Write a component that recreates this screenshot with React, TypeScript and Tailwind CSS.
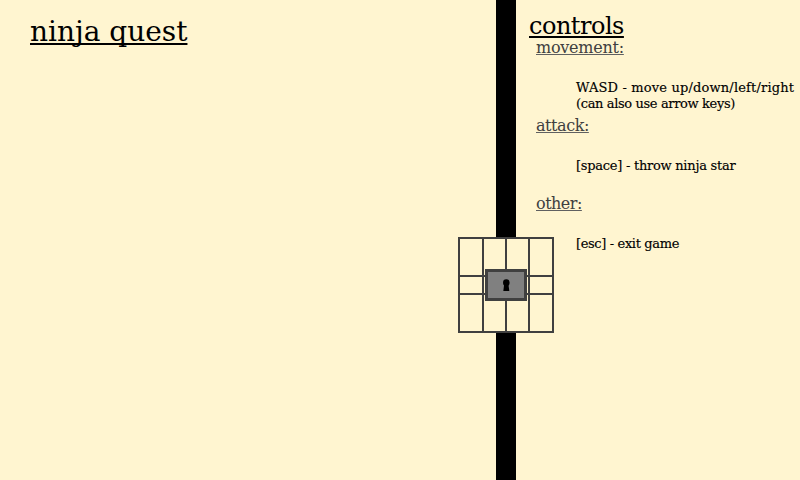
import React from "react";

function Section({ title, titleClass, children }: { title: string; titleClass: string; children: React.ReactNode }) {
  return (
    <section className="h-[78px]">
      <h3 className="ml-[7px] h-[42px] text-[16px] leading-[19px] text-[#404040]">
        <span className={"inline-block whitespace-nowrap underline decoration-[#606060] decoration-1 underline-offset-[1px] [text-decoration-skip-ink:none] " + titleClass}>{title}</span>
      </h3>
      <div className="ml-[47px] whitespace-nowrap text-[13px] leading-[16px] text-black [-webkit-text-stroke:0.15px_black]">{children}</div>
    </section>
  );
}

function Gate() {
  return (
    <svg className="absolute left-[458px] top-[237px]" width="96" height="96" viewBox="0 0 96 96">
      <rect x="1" y="1" width="94" height="94" fill="#fff5d0" stroke="#404040" strokeWidth="2" />
      <path d="M25 0V96M48 0V96M71 0V96M0 39H96M0 57H96" stroke="#404040" strokeWidth="2" />
      <rect x="28.5" y="33.5" width="39" height="29" fill="#808080" stroke="#404040" strokeWidth="3" />
      <ellipse cx="48.3" cy="45.7" rx="3.3" ry="3.4" />
      <path d="M46.2 47h4.2l.9 7h-6z" />
    </svg>
  );
}

export default function App() {
  return (
    <main className="relative flex h-[480px] w-[800px] overflow-hidden bg-[#fff5d0] font-['DejaVu_Serif',serif] text-black">
      <div className="w-[496px] pl-[30px] pt-[14px]">
        <h1 className="text-[28px] leading-[36px]">
          <span className="inline-block whitespace-nowrap underline decoration-[1.5px] underline-offset-[2px] [text-decoration-skip-ink:none]">ninja quest</span>
        </h1>
      </div>
      <div className="w-[20px] bg-black" />
      <aside className="w-[284px] pl-[13px] pt-[10px]">
        <h2 className="h-[28px] text-[24px] leading-[28px]">
          <span className="inline-block whitespace-nowrap pt-[2px] tracking-[-0.5px] underline decoration-[1.5px] underline-offset-[2px] [text-decoration-skip-ink:none]">controls</span>
        </h2>
        <Section title="movement:" titleClass="tracking-[-0.25px]">
          <p className="tracking-[0.17px]">WASD - move up/down/left/right</p>
          <p className="tracking-[-0.36px]">(can also use arrow keys)</p>
        </Section>
        <Section title="attack:" titleClass="tracking-[-0.45px]">
          <p className="tracking-[-0.26px]">[space] - throw ninja star</p>
        </Section>
        <Section title="other:" titleClass="tracking-[-0.5px]">
          <p className="tracking-[-0.36px]">[esc] - exit game</p>
        </Section>
      </aside>
      <Gate />
    </main>
  );
}
